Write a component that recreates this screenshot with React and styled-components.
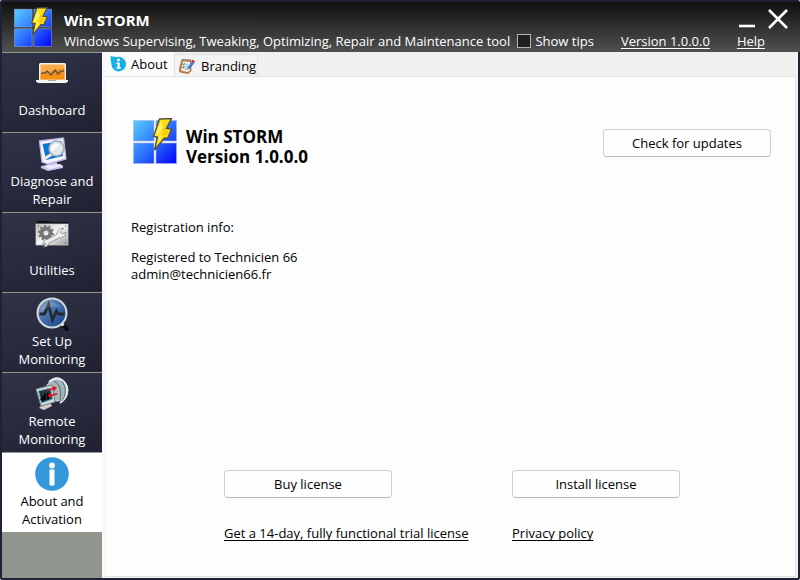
import React from "react";
import styled, { createGlobalStyle, css } from "styled-components";

const Global = createGlobalStyle`
  * { box-sizing: border-box; }
  html, body { margin: 0; padding: 0; background: #fff; }
  body, button, input { font-family: "Open Sans", "Noto Sans", sans-serif; font-size: 13px; }
`;

const Window = styled.div`
  min-height: 100vh;
  display: flex;
  flex-direction: column;
  background: #1f2235;
  border: 2px solid #1f2235;
  border-radius: 2px;
  color: #000;
  line-height: 18px;
`;

const Header = styled.header`
  display: flex;
  height: 50px;
  padding-left: 12px;
  background: linear-gradient(#101010, #505050);
  color: #fff;
  margin-right: -2px;
`;

const HeaderText = styled.div`
  flex: 1;
  margin-left: 12px;
  display: flex;
  flex-direction: column;
  justify-content: space-between;
`;

const HeaderRow = styled.div`
  display: flex;
  justify-content: space-between;
  align-items: center;
`;

const AppTitle = styled.h1`
  margin: 7px 0 0;
  font-size: 15px;
  line-height: 20px;
  font-weight: 700;
`;

const WindowControls = styled.div`
  display: flex;
  gap: 11px;
  padding: 6px 10px 0 0;
`;

const IconButton = styled.button`
  display: flex;
  padding: 0;
  border: 0;
  background: none;
  color: #fff;
  cursor: pointer;
`;

const Subtitle = styled.span`
  white-space: nowrap;
`;

const HeaderTools = styled.div`
  display: flex;
  align-items: center;
  gap: 27px;
  padding-right: 35px;
  white-space: nowrap;
`;

const TipsLabel = styled.label`
  display: flex;
  align-items: center;
  gap: 4px;
`;

const TipsBox = styled.input`
  appearance: none;
  width: 14px;
  height: 14px;
  margin: 0;
  border: 1px solid #b4b4b4;
  background: #202020;
  &:checked { background: #3498db; }
`;

const Link = styled.a`
  color: inherit;
  white-space: nowrap;
  text-underline-offset: 2px;
  text-decoration-thickness: 1px;
  text-decoration-skip-ink: none;
`;

const Body = styled.div`
  flex: 1;
  display: flex;
`;

const Sidebar = styled.nav`
  width: 100px;
  flex: none;
  background: #90958e;
`;

const NavItem = styled.button`
  display: flex;
  flex-direction: column;
  align-items: center;
  width: 100%;
  height: 80px;
  padding: 4px 0 3px;
  border: 0;
  border-top: 1px solid #90958e;
  background: linear-gradient(160deg, #303347, #202233);
  color: #fff;
  line-height: 18px;
  cursor: pointer;
  ${(p) => p.$active && css`
    background: #fff;
    color: #000;
  `}
`;

const NavLabel = styled.span`
  flex: 1;
  display: flex;
  align-items: center;
  justify-content: center;
  width: 90px;
`;

const Main = styled.main`
  flex: 1;
  display: flex;
  flex-direction: column;
  background: #f0f0f0;
  border-left: 3px solid #f8f8f8;
  padding-right: 2px;
  padding-bottom: 1px;
`;

const Tabs = styled.div`
  display: flex;
  height: 24px;
`;

const Tab = styled.button`
  display: flex;
  align-items: center;
  gap: 5px;
  border: 0;
  color: #000;
  ${(p) => p.$active ? css`
    width: 69px;
    height: 25px;
    padding: 0 0 1px 5px;
    background: #fbfbfb;
  ` : css`
    width: 84px;
    height: 22px;
    margin-top: 2px;
    padding: 0 0 0 4px;
    background: #f3f3f3;
    border: 1px solid #e2e2e2;
    border-bottom: 0;
  `}
`;

const Page = styled.section`
  flex: 1;
  display: flex;
  flex-direction: column;
  padding: 41px 24px 34px 26px;
  background: #fdfdfd;
  border: 1px solid #e3e3e3;
  border-left: 0;
`;

const ProductRow = styled.div`
  display: flex;
  align-items: flex-start;
  gap: 9px;
  padding-left: 2px;
`;

const ProductTitle = styled.h2`
  flex: 1;
  margin: 9px 0 0;
  font-size: 17px;
  line-height: 20px;
  font-weight: 700;
`;

const Button = styled.button`
  width: 168px;
  height: 28px;
  padding: 0;
  border: 1px solid #cfcfcf;
  border-bottom-color: #b8b8b8;
  border-radius: 4px;
  background: #fefefe;
  color: #000;
  cursor: pointer;
`;

const UpdateButton = styled(Button)`
  margin-top: 11px;
`;

const Registration = styled.div`
  margin-top: 52px;
  line-height: 17px;
`;

const Paragraph = styled.p`
  margin: 0 0 13px;
`;

const Licensing = styled.div`
  margin-top: auto;
  display: grid;
  grid-template-columns: 288px 168px;
  row-gap: 26px;
  padding-left: 2px;
  justify-content: center;
`;

function StormLogo({ size, id }) {
  return (
    <svg width={size} height={size + 2} viewBox="0 0 44 46" aria-hidden="true">
      <defs>
        <linearGradient id={id} gradientUnits="userSpaceOnUse" x1="0" y1="2" x2="44" y2="46">
          <stop offset="0" stopColor="#5bd0ff" />
          <stop offset="0.5" stopColor="#2c72ff" />
          <stop offset="1" stopColor="#0000f5" />
        </linearGradient>
      </defs>
      <path d="M.5 2.500h20.500v20.500H.5zM23 2.500h20.500v20.500H23zM.5 25h20.500v20.500H.5zM23 25h20.500v20.500H23z" fill={`url(#${id})`} stroke="#a0b4dd" strokeWidth=".6" />
      <path d="M26.500 1 38.500.6 33.500 10.500l5 .5-4 9.500-3-.5-10 12L24.500 19l-4-.5z" fill="#ffdf12" stroke="#4c4b43" strokeWidth="1.300" />
      <path d="M28 3 22.500 17l4 .5L24.500 26 29 18l-4-1 5-7z" fill="#fff36a" />
      <path d="m36 3-5 9 4 1-3 5-3-1 4-4-4-1z" fill="#f0c20b" />
    </svg>
  );
}

function InfoBadge({ size }) {
  return (
    <svg width={size} height={size} viewBox="0 0 34 34" aria-hidden="true">
      <circle cx="17" cy="17" r="16.800" fill="#3498db" />
      <circle cx="17" cy="8.500" r="2.900" fill="#fff" />
      <rect x="14.500" y="12.500" width="5" height="16" rx=".7" fill="#fff" />
    </svg>
  );
}

function DashboardIcon() {
  return (
    <svg width="34" height="34" viewBox="0 0 34 34" aria-hidden="true">
      <rect x="4" y="6" width="27" height="19" rx="1.500" fill="#f5f1e9" />
      <path d="M5.500 7.500h24v15h-24z" fill="#ffab49" />
      <path d="M5.500 16.500l24-5.500v11.500h-24z" fill="#f28200" opacity=".7" />
      <path d="M6 16h4l2-2 4 4 4-5 3 4 3-3h3" fill="none" stroke="#5e5a45" strokeWidth="1.500" />
      <path d="M1 23h32v1.500l-2 1.500H3l-2-1.500z" fill="#f5f5f1" />
      <path d="M13 23h8v1h-8z" fill="#aaa" />
    </svg>
  );
}

function DiagnoseIcon() {
  return (
    <svg width="34" height="34" viewBox="0 0 34 34" aria-hidden="true">
      <path d="m11 26 10-2 2 4 5 1v2l-15 3-7-3v-2l6-1z" fill="#c7c5ed" />
      <path d="m9 29 16-2 3 2-14 3z" fill="#eeeafa" />
      <path d="m4.500 4 24-3 2.500 21-18 5-6-2z" fill="#f7f6ff" stroke="#b9b5e8" strokeWidth="1.300" />
      <path d="m7.500 7 19-3 1.500 15-17 4z" fill="#0676d6" />
      <path d="m17 17-8 5" stroke="#f4e6dc" strokeWidth="3" strokeLinecap="round" />
      <circle cx="21.500" cy="11.500" r="7.500" fill="#dfe8eb" stroke="#a7a8b7" strokeWidth="1.500" />
      <path d="M16 10q3-5 9-2-6 5-9 7z" fill="#fff" opacity=".8" />
    </svg>
  );
}

function UtilitiesIcon() {
  return (
    <svg width="34" height="34" viewBox="0 0 34 34" aria-hidden="true">
      <defs>
        <linearGradient id="plate" x2="1" y2="1"><stop stopColor="#b8b8b8" /><stop offset=".5" stopColor="#f6f6f6" /><stop offset="1" stopColor="#9b9b9b" /></linearGradient>
      </defs>
      <path d="M2 4h12l1 1h18v3H2z" fill="#111219" />
      <path d="M1 7h32v21H1z" fill="url(#plate)" stroke="#d8d8d8" strokeWidth=".7" />
      <circle cx="11" cy="16" r="4.500" fill="none" stroke="#777" strokeWidth="4" />
      <circle cx="11" cy="16" r="7" fill="none" stroke="#777" strokeWidth="2" strokeDasharray="2.200 2.200" />
      <path d="M8 28q0-5 5-6l9-5q0-6 7-6l-4 4 2 2 4-2q-1 6-7 6l-10 5q-1 4-5 4l2-4z" fill="#eee" stroke="#888" strokeWidth=".8" />
      <path d="M3 9h1M30 9h1M30 26h1" stroke="#777" strokeWidth="1.300" />
    </svg>
  );
}

function MonitorIcon() {
  return (
    <svg width="34" height="34" viewBox="0 0 34 34" aria-hidden="true">
      <defs>
        <linearGradient id="lens" x2="1" y2="1"><stop stopColor="#93a6bf" /><stop offset=".48" stopColor="#416da9" /><stop offset="1" stopColor="#123d88" /></linearGradient>
      </defs>
      <path d="m28 28 4 4" stroke="#0c0d10" strokeWidth="4.500" strokeLinecap="round" />
      <path d="m27 27 1.500 1.500" stroke="#eee" strokeWidth="3" />
      <circle cx="17" cy="16" r="14.500" fill="url(#lens)" stroke="#d4d8dd" strokeWidth="2" />
      <path d="M4.500 17h5l4-9 4 15 4-9 2 3h6" fill="none" stroke="#232a33" strokeWidth="2.800" />
      <path d="M6 10q9-9 21 0-12-2-21 5z" fill="#fff" opacity=".15" />
    </svg>
  );
}

function RemoteIcon() {
  return (
    <svg width="34" height="34" viewBox="0 0 34 34" aria-hidden="true">
      <circle cx="22" cy="13" r="11" fill="#a6b8bd" stroke="#dbe4e6" />
      <path d="M14 5q9-8 16 1 6 12-5 20" fill="none" stroke="#e3edef" strokeWidth="2" />
      <path d="M27 4q7 10 0 20M19 4q9 4 6 20" fill="none" stroke="#596c74" />
      <path d="m7 28 8-2 2 3-8 4-5-2z" fill="#d0ccc6" />
      <path d="m1 12 16-4 3 17-14 4z" fill="#d8dcda" stroke="#777" />
      <path d="m3.500 14 12-3 2 11-11 4z" fill="#22343c" stroke="#4db5c4" />
      <path d="m6 23 2-4v5m2-7v6m3-7v6" stroke="#090909" strokeWidth="2" />
      <path d="m11 13 7-2-.5-2 4.500 1.500-3 4-.5-2-7 1.500zM22 16l-6 1.500-.5-2-3 3.500 4.500 2-.5-2 6-1.500z" fill="#e01020" />
    </svg>
  );
}

function AboutTabIcon() {
  return (
    <svg width="16" height="16" viewBox="0 0 16 16" aria-hidden="true">
      <path d="M.3.3 7 1A7.300 7.300 0 1 1 1.500 9z" fill="#14b0e6" />
      <circle cx="8.500" cy="4" r="1.400" fill="#fff" />
      <path d="M6.300 6.500h3.400v5h1.300v1.300H6.300v-1.300h1.200V7.800H6.300z" fill="#fff" />
    </svg>
  );
}

function BrandingIcon() {
  return (
    <svg width="17" height="16" viewBox="0 0 17 16" aria-hidden="true">
      <path d="m3 1.500 9 .5v11l-3 2.500-8-1.500L0 12z" fill="#c77f42" stroke="#96592f" strokeWidth=".7" />
      <path d="m4 3.500 7 .5v8.500L8.500 14 2 12.500z" fill="#edf2fb" />
      <path d="m5 1 4 .5.7 2-5-.5z" fill="#999" />
      <path d="m4 6 5 .5M4 8l4 .5M3.500 10l4 .5" stroke="#88a4cd" strokeWidth=".8" />
      <path d="m13.500 3 2 2-5 6-3 1 1-3z" fill="#3c7ed8" />
      <path d="m12.500 3 1-1.500 2.500 2L15 5z" fill="#e82222" />
      <path d="m7 12 1-3 2 2z" fill="#e9b878" />
      <path d="m3.500 6 1 1 1-2M3 9l1 1 1-2" stroke="#38a33c" fill="none" />
    </svg>
  );
}

const NAV = [
  ["Dashboard", DashboardIcon],
  ["Diagnose and Repair", DiagnoseIcon],
  ["Utilities", UtilitiesIcon],
  ["Set Up Monitoring", MonitorIcon],
  ["Remote Monitoring", RemoteIcon],
  ["About and Activation", InfoBadge],
];

const HeaderLogo = styled.div`
  padding-top: 5px;
`;

const SubtitleRow = styled(HeaderRow)`
  padding-bottom: 2px;
`;

export default function App() {
  return (
    <>
      <Global />
      <Window>
        <Header>
          <HeaderLogo><StormLogo size={38} id="headerLogo" /></HeaderLogo>
          <HeaderText>
            <HeaderRow>
              <AppTitle>Win STORM</AppTitle>
              <WindowControls>
                <IconButton aria-label="Minimize">
                  <svg width="18" height="22" viewBox="0 0 18 22"><path d="M0 18h16" stroke="currentColor" strokeWidth="2.600" /></svg>
                </IconButton>
                <IconButton aria-label="Close">
                  <svg width="22" height="22" viewBox="0 0 22 22"><path d="m1 2 18 18M19 2 1 20" stroke="currentColor" strokeWidth="2.600" /></svg>
                </IconButton>
              </WindowControls>
            </HeaderRow>
            <SubtitleRow>
              <Subtitle>Windows Supervising, Tweaking, Optimizing, Repair and Maintenance tool</Subtitle>
              <HeaderTools>
                <TipsLabel><TipsBox type="checkbox" />Show tips</TipsLabel>
                <Link href="#version">Version 1.0.0.0</Link>
                <Link href="#help">Help</Link>
              </HeaderTools>
            </SubtitleRow>
          </HeaderText>
        </Header>
        <Body>
          <Sidebar>
            {NAV.map(([label, Icon], i) => (
              <NavItem key={label} $active={i === NAV.length - 1}>
                <Icon size={34} />
                <NavLabel>{label}</NavLabel>
              </NavItem>
            ))}
          </Sidebar>
          <Main>
            <Tabs role="tablist">
              <Tab role="tab" aria-selected="true" $active><AboutTabIcon />About</Tab>
              <Tab role="tab" aria-selected="false"><BrandingIcon />Branding</Tab>
            </Tabs>
            <Page>
              <ProductRow>
                <StormLogo size={44} id="productLogo" />
                <ProductTitle>Win STORM<br />Version 1.0.0.0</ProductTitle>
                <UpdateButton>Check for updates</UpdateButton>
              </ProductRow>
              <Registration>
                <Paragraph>Registration info:</Paragraph>
                <Paragraph>Registered to Technicien 66<br />admin@technicien66.fr</Paragraph>
              </Registration>
              <Licensing>
                <Button>Buy license</Button>
                <Button>Install license</Button>
                <Link href="#trial">Get a 14-day, fully functional trial license</Link>
                <Link href="#privacy">Privacy policy</Link>
              </Licensing>
            </Page>
          </Main>
        </Body>
      </Window>
    </>
  );
}
